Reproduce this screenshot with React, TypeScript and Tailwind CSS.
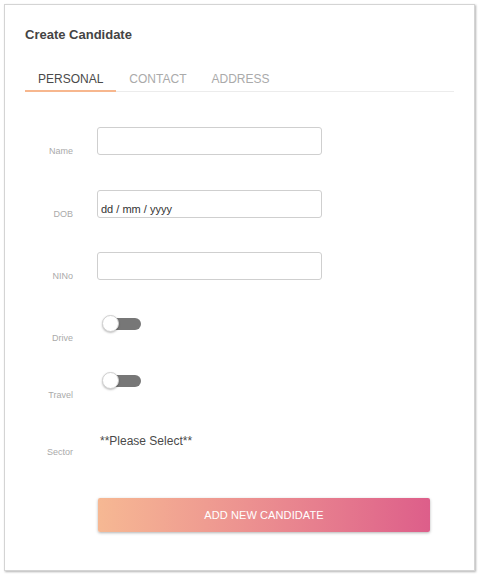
export default function App() {
  const inputCls = 'w-[225px] h-[28px] border border-[#cfcfcf] rounded-[3px] bg-white';
  const labelCls = 'w-[48px] text-right text-[9px] leading-[11px] text-[#aaaaaa] shrink-0';

  return (
    <div className="min-h-[577px] bg-white pt-[4px] pl-[4px]" style={{ fontFamily: '"Liberation Sans", Arial, sans-serif' }}>
      <div className="w-[471px] border border-[#d4d4d4] shadow-[1px_1px_2px_rgba(0,0,0,0.3)] bg-white px-5 pt-[22px] pb-[38px]">
        <h1 className="text-[13px] leading-[16px] font-bold text-[#444]">Create Candidate</h1>

        {/* tabs */}
        <div className="mt-[29px] flex border-b border-[#ececec]">
          <div className="px-[13px] pb-[4px] text-[12px] leading-[14px] text-[#4a4a4a] border-b-2 border-[#f7b78e] -mb-px">PERSONAL</div>
          <div className="px-[13px] pb-[4px] text-[12px] leading-[14px] text-[#aaaaaa]">CONTACT</div>
          <div className="px-[12px] pb-[4px] text-[12px] leading-[14px] text-[#aaaaaa]">ADDRESS</div>
        </div>

        {/* Name */}
        <div className="mt-[35px] flex items-end gap-[24px]">
          <div className={labelCls + ' mb-[-2px]'}>Name</div>
          <div className={inputCls} />
        </div>

        {/* DOB */}
        <div className="mt-[35px] flex items-end gap-[24px]">
          <div className={labelCls + ' mb-[-2px]'}>DOB</div>
          <div className={inputCls + ' flex items-end pl-[3px] pb-[1px]'}>
            <span className="text-[11px] leading-[14px] text-[#333]">dd / mm / yyyy</span>
          </div>
        </div>

        {/* NINo */}
        <div className="mt-[34px] flex items-end gap-[24px]">
          <div className={labelCls + ' mb-[-2px]'}>NINo</div>
          <div className={inputCls} />
        </div>

        {/* Drive */}
        <div className="mt-[36px] h-[26px] flex items-end gap-[24px]">
          <div className={labelCls + ' mb-[-2px]'}>Drive</div>
          <Toggle />
        </div>

        {/* Travel */}
        <div className="mt-[31px] h-[26px] flex items-end gap-[24px]">
          <div className={labelCls + ' mb-[-2px]'}>Travel</div>
          <Toggle />
        </div>

        {/* Sector */}
        <div className="mt-[35px] h-[22px] flex items-end gap-[24px]">
          <div className={labelCls + ' mb-[-2px]'}>Sector</div>
          <div className="self-start pl-[3px] text-[12px] leading-[14px] text-[#4a4a4a]">**Please Select**</div>
        </div>

        <div className="mt-[42px] pl-[73px]">
          <button className="w-[332px] h-[34px] rounded-[2px] bg-linear-to-r from-[#f6b893] to-[#dd5e8a] shadow-[0_1px_3px_rgba(0,0,0,0.3)] text-white text-[11px] tracking-[0.1px]">
            ADD NEW CANDIDATE
          </button>
        </div>
      </div>
    </div>
  );
}

function Toggle() {
  return (
    <div className="self-start relative w-[40px] h-[17px] ml-[5px] -mt-px">
      <div className="absolute left-[6px] top-[3px] w-[33px] h-[12px] rounded-full bg-[#777777]" />
      <div className="absolute left-0 top-0 w-[17px] h-[17px] rounded-full bg-white border border-[#d0d0d0] shadow-[0_1px_2px_rgba(0,0,0,0.25)]" />
    </div>
  );
}
